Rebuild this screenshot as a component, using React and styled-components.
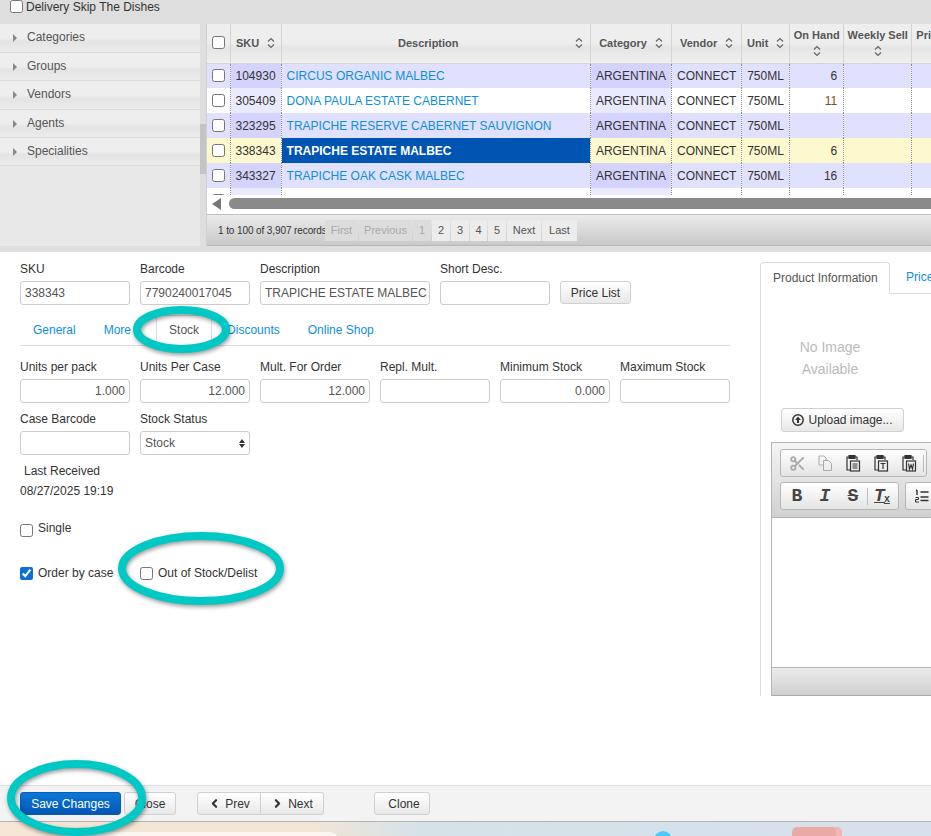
import styled, { createGlobalStyle } from 'styled-components';
import { Scissors, ChevronLeft, ChevronRight } from 'lucide-react';

const GlobalStyle = createGlobalStyle`
    html, body {
        margin: 0;
        padding: 0;
        background: #fff;
    }
    body {
        font-family: "Liberation Sans", Arial, sans-serif;
        font-size: 12px;
        color: #333;
    }
`;

const Page = styled.div`
    position: relative;
    width: 931px;
    height: 836px;
    overflow: hidden;
    display: flex;
    flex-direction: column;
`;

/* top band */
const TopBand = styled.div`
    height: 24px;
    background: #dedede;
    display: flex;
    align-items: flex-start;
    padding-left: 10px;
`;

const Check = styled.input.attrs({ type: 'checkbox' })`
    width: 13px;
    height: 13px;
    margin: 0;
    flex: none;
    accent-color: #0b6fd6;
`;

const TopLabel = styled.label`
    display: flex;
    align-items: center;
    gap: 3px;
    height: 13px;
    color: #333;
`;

const ListArea = styled.div`
    height: 228px;
    background: #dedede;
    display: flex;
    align-items: flex-start;
`;

const Sidebar = styled.div`
    width: 200px;
    height: 222px;
    background: #e8e8e8;
    flex: none;
`;

const SideItem = styled.div`
    height: ${(p) => p.$h}px;
    display: flex;
    align-items: center;
    padding: 0 0 2px 13px;
    gap: 10px;
    color: #555;
    border-bottom: 1px solid #dcdcdc;
    background: linear-gradient(#eeeeee 0, #eeeeee 50%, #e4e4e4 62%, #ececec 100%);
    box-sizing: border-box;
`;

const Arrow = styled.span`
    width: 0;
    height: 0;
    margin-top: 2px;
    border-left: 4px solid #888;
    border-top: 4px solid transparent;
    border-bottom: 4px solid transparent;
`;

const Splitter = styled.div`
    width: 6px;
    height: 222px;
    flex: none;
    background: #dedede;
    display: flex;
    flex-direction: column;
    padding-top: 100px;
    box-sizing: border-box;
`;

const SplitThumb = styled.div`
    height: 50px;
    background: #c4c4c4;
`;

const GridPanel = styled.div`
    flex: 1;
    min-width: 0;
    height: 222px;
    overflow: hidden;
    background: #fff;
    border-left: 1px solid #d0d0d0;
    display: flex;
    flex-direction: column;
`;

const TableClip = styled.div`
    height: 171px;
    overflow: hidden;
    flex: none;
`;

const Table = styled.table`
    border-collapse: collapse;
    table-layout: fixed;
    width: 800px;
`;

const Th = styled.th`
    width: ${(p) => p.$w}px;
    height: 39px;
    padding: 0 2px;
    box-sizing: border-box;
    font-size: 11px;
    font-weight: bold;
    color: #555;
    text-align: center;
    vertical-align: middle;
    white-space: nowrap;
    overflow: hidden;
    background: linear-gradient(#eeeeee 0, #eeeeee 48%, #e5e5e5 62%, #f0f0f0 100%);
    border-left: 1px solid #d4d4d4;
    border-bottom: 1px solid #d4d4d4;
    &:first-child {
        border-left: 0;
    }
`;

const ThInner = styled.div`
    display: flex;
    flex-direction: ${(p) => (p.$stack ? 'column' : 'row')};
    align-items: center;
    justify-content: ${(p) => (p.$start ? 'flex-start' : 'center')};
    gap: ${(p) => (p.$stack ? 4 : 8)}px;
    padding-left: ${(p) => (p.$start ? 2 : 0)}px;
    padding-right: ${(p) => p.$pr || 0}px;
    padding-bottom: ${(p) => (p.$start ? 16 : 0)}px;
`;

const DescTitle = styled.span`
    flex: 1;
    padding-left: 6px;
    text-align: center;
`;

const Td = styled.td`
    height: 25px;
    padding: 0 ${(p) => (p.$right ? 6 : 5)}px;
    box-sizing: border-box;
    white-space: nowrap;
    overflow: hidden;
    font-size: 12px;
    text-align: ${(p) => (p.$right ? 'right' : 'left')};
    color: ${(p) => p.$color || '#333'};
    background: ${(p) => p.$bg};
    border-left: 1px dotted #8d8d8d;
    &:first-child {
        border-left: 0;
        text-align: center;
        padding: 0;
    }
    input {
        display: block;
        margin: 0 auto;
    }
`;

const Link = styled.span`
    color: #0d8fdb;
`;

const Selected = styled.span`
    color: #fff;
    font-weight: bold;
`;

const HScroll = styled.div`
    height: 17px;
    flex: none;
    display: flex;
    align-items: center;
    padding-left: 5px;
    gap: 8px;
`;

const ScrollLeft = styled.span`
    width: 0;
    height: 0;
    border-right: 9px solid #777;
    border-top: 6px solid transparent;
    border-bottom: 6px solid transparent;
`;

const ScrollThumb = styled.div`
    flex: 1;
    height: 11px;
    background: #8a8a8a;
    border-radius: 6px 0 0 6px;
`;

const Pager = styled.div`
    height: 32px;
    margin-top: 2px;
    flex: none;
    box-sizing: border-box;
    border-top: 1px solid #c0c0c0;
    border-bottom: 1px solid #b8b8b8;
    background: linear-gradient(#ebebeb, #c9c9c9);
    display: flex;
    align-items: center;
    padding-left: 11px;
`;

const PagerInfo = styled.span`
    font-size: 10px;
    letter-spacing: -0.1px;
    color: #333;
    width: 107px;
    flex: none;
    white-space: nowrap;
`;

const PageButton = styled.span`
    height: 21px;
    width: ${(p) => p.$w}px;
    margin-right: 1px;
    display: flex;
    align-items: center;
    justify-content: center;
    font-size: 11px;
    color: ${(p) => (p.$off ? '#aaa' : '#555')};
    background: ${(p) => (p.$off ? '#dcdcdc' : '#ececec')};
`;

/* product form */
const Editor = styled.div`
    flex: 1;
    display: flex;
    background: #fff;
    min-height: 0;
`;

const FormColumn = styled.div`
    width: 730px;
    flex: none;
    padding: 10px 0 0 20px;
    box-sizing: border-box;
`;

const FieldRow = styled.div`
    display: flex;
    align-items: flex-end;
    gap: 10px;
    margin-bottom: ${(p) => p.$mb || 0}px;
`;

const Field = styled.div`
    width: ${(p) => (p.$wide ? 170 : 110)}px;
    flex: none;
`;

const FieldLabel = styled.div`
    height: 19px;
    line-height: 15px;
    white-space: nowrap;
`;

const TextBox = styled.div`
    height: 24px;
    box-sizing: border-box;
    border: 1px solid #ccc;
    border-radius: 3px;
    padding: 0 4px;
    display: flex;
    align-items: center;
    justify-content: ${(p) => (p.$right ? 'flex-end' : 'space-between')};
    white-space: nowrap;
    overflow: hidden;
    color: #555;
    background: #fff;
`;

const Carets = styled.span`
    display: flex;
    flex-direction: column;
    gap: 1px;
    &::before, &::after {
        content: '';
        width: 0;
        height: 0;
        border-left: 3px solid transparent;
        border-right: 3px solid transparent;
    }
    &::before {
        border-bottom: 4px solid #333;
    }
    &::after {
        border-top: 4px solid #333;
    }
`;

const Button = styled.button`
    height: ${(p) => p.$h || 24}px;
    width: ${(p) => p.$w}px;
    padding: 0 0 0 ${(p) => p.$pl || 0}px;
    margin-left: ${(p) => p.$ml || 0}px;
    margin-bottom: ${(p) => p.$mb || 0}px;
    flex: none;
    border: 1px solid #d0d0d0;
    border-radius: 3px;
    font: 12px "Liberation Sans", Arial, sans-serif;
    color: #333;
    background: linear-gradient(#fff, #e8e8e8);
    display: inline-flex;
    align-items: center;
    justify-content: center;
    gap: 4px;
`;

const TabBar = styled.div`
    height: 30px;
    margin: 10px 0 14px;
    width: 710px;
    display: flex;
    align-items: stretch;
    border-bottom: 1px solid #ddd;
`;

const Tab = styled.div`
    padding: 0 13px;
    margin-right: ${(p) => p.$mr ?? 2}px;
    display: flex;
    align-items: center;
    color: ${(p) => (p.$active ? '#555' : '#0d8fdb')};
    ${(p) => p.$active && `
        border: 1px solid #ddd;
        border-bottom: 0;
        padding: 0 12px 1px;
        background: #fff;
    `}
`;

const InfoLine = styled.div`
    padding-left: ${(p) => p.$pl || 0}px;
    margin-top: ${(p) => p.$mt || 0}px;
    line-height: 15px;
`;

const CheckRow = styled.div`
    display: flex;
    align-items: center;
    margin-top: ${(p) => p.$mt}px;
`;

const CheckItem = styled.label`
    display: flex;
    align-items: ${(p) => (p.$raised ? 'flex-start' : 'center')};
    gap: 5px;
    width: ${(p) => p.$w || 'auto'};
    span {
        margin-top: ${(p) => (p.$raised ? -3 : 0)}px;
    }
`;

/* right column */
const SidePane = styled.div`
    flex: 1;
    min-width: 0;
    padding: 10px 0 0 30px;
    overflow: hidden;
`;

const SideTabs = styled.div`
    height: 31px;
    display: flex;
    width: 300px;
    border-bottom: 1px solid #ddd;
`;

const SideTab = styled.div`
    display: flex;
    align-items: center;
    box-sizing: border-box;
    height: 32px;
    padding: 0 0 2px 16px;
    flex: none;
    white-space: nowrap;
    color: ${(p) => (p.$active ? '#555' : '#0d8fdb')};
    ${(p) => p.$active && `
        width: 130px;
        padding-left: 12px;
        border: 1px solid #ddd;
        border-bottom: 0;
        border-radius: 4px 4px 0 0;
        background: #fff;
    `}
`;

const SideBody = styled.div`
    height: 402px;
    width: 300px;
    border-left: 1px solid #ddd;
    padding: 0 0 0 10px;
    box-sizing: border-box;
`;

const NoImage = styled.div`
    width: 118px;
    height: 114px;
    display: flex;
    flex-direction: column;
    justify-content: flex-end;
    align-items: center;
    padding-bottom: 28px;
    box-sizing: border-box;
    font-size: 14px;
    line-height: 22px;
    text-align: center;
    color: #bbb;
`;

const UploadRow = styled.div`
    padding-left: 10px;
`;

const Wysiwyg = styled.div`
    margin-top: 10px;
    height: 254px;
    border: 1px solid #b6b6b6;
    border-bottom-color: #aaa;
    box-sizing: border-box;
    display: flex;
    flex-direction: column;
`;

const WysiwygTools = styled.div`
    height: 75px;
    box-sizing: border-box;
    flex: none;
    padding: 6px 0 0 8px;
    background: linear-gradient(#f4f4f4, #cfd1cf);
    border-bottom: 1px solid #b6b6b6;
    display: flex;
    flex-direction: column;
    gap: 5px;
`;

const ToolRow = styled.div`
    display: flex;
    gap: 6px;
`;

const ToolGroup = styled.div`
    height: 28px;
    box-sizing: border-box;
    flex: none;
    border: 1px solid #b6b6b6;
    border-radius: 3px;
    background: linear-gradient(#fff, #e4e4e4);
    display: flex;
    align-items: center;
    padding: 0 2px;
`;

const ToolIcon = styled.span`
    width: 28px;
    height: 26px;
    display: flex;
    align-items: center;
    justify-content: center;
    font-family: "Liberation Mono", monospace;
    font-weight: bold;
    font-style: ${(p) => (p.$italic ? 'italic' : 'normal')};
    font-size: 18px;
    color: ${(p) => (p.$off ? '#aaa' : '#444')};
    text-decoration: ${(p) => (p.$strike ? 'line-through' : p.$under ? 'underline' : 'none')};
`;

const ClearMark = styled.span`
    font-size: 10px;
    font-style: normal;
    align-self: flex-end;
    margin: 0 0 4px -1px;
`;

const ToolSep = styled.span`
    width: 1px;
    height: 17px;
    background: #bbb;
`;

const WysiwygBody = styled.div`
    flex: 1;
    background: #fff;
`;

const WysiwygFoot = styled.div`
    height: 27px;
    flex: none;
    border-top: 1px solid #b6b6b6;
    background: linear-gradient(#ebebeb, #cfd1cf);
`;

/* footer */
const Footer = styled.div`
    height: 37px;
    flex: none;
    box-sizing: border-box;
    background: #f3f3f3;
    border-top: 1px solid #ddd;
    border-bottom: 1px solid #b4b4b4;
    display: flex;
    align-items: center;
    padding-left: 20px;
`;

const SaveButton = styled(Button)`
    color: #fff;
    border-color: #0b5bb5;
    background: linear-gradient(#0a78d8, #0556b4);
`;

const Pair = styled.div`
    display: flex;
    margin-left: ${(p) => p.$ml}px;
    ${Button}:first-child {
        border-radius: 3px 0 0 3px;
    }
    ${Button}:last-child {
        border-radius: 0 3px 3px 0;
        border-left: 0;
    }
`;

const Desktop = styled.svg`
    display: block;
    width: 931px;
    height: 14px;
    flex: none;
`;

/* teal marker rings drawn on top of the screenshot */
const Ring = styled.svg`
    position: absolute;
    left: ${(p) => p.$x}px;
    top: ${(p) => p.$y}px;
    overflow: visible;
    pointer-events: none;
    filter: drop-shadow(1px 2px 2px rgba(0, 0, 0, 0.4));
`;

const Marker = ({ x, y, w, h }) => (
    <Ring $x={x} $y={y} width={w} height={h}>
        <ellipse cx={w / 2} cy={h / 2} rx={w / 2 - 4} ry={h / 2 - 4} fill="none" stroke="#00c9c5" strokeWidth="8" />
    </Ring>
);

const SortIcon = () => (
    <svg width="8" height="12" viewBox="0 0 8 12" fill="none" stroke="#666" strokeWidth="1.2">
        <path d="M1 4.5 4 1.5 7 4.5M1 7.5 4 10.5 7 7.5" />
    </svg>
);

const PasteIcon = ({ letter }) => (
    <svg width="16" height="18" viewBox="0 0 16 18" fill="none" stroke="#333" strokeWidth="1.2">
        <path d="M4 3H2v13h3" />
        <path d="M4 1.5h6v3H4z" fill="#333" />
        <path d="M10 3h2v3" />
        <rect x="5.5" y="7" width="9" height="10" />
        {letter === 'lines' && <path d="M7.5 10h5M7.5 12h5M7.5 14h5" />}
        {letter === 'T' && <path d="M7.5 9.5h5M10 9.5V15" />}
        {letter === 'W' && <path d="M7.5 9.5l1 5.5 1.5-4 1.5 4 1-5.5" />}
    </svg>
);

const CopyIcon = () => (
    <svg width="15" height="16" viewBox="0 0 15 16" fill="none" stroke="#aaa">
        <path d="M1 1h5l2 2v2M1 1v9h4" />
        <path d="M5.5 5.5h5l3 3v7h-8z" />
    </svg>
);

const ListIcon = () => (
    <svg width="14" height="14" viewBox="0 0 14 14" fill="none" stroke="#333" strokeWidth="1.4">
        <path d="M5.5 3h8M5.5 8h8M5.5 11.5h8M2 1v5M1 1.5 2 1" />
        <path d="M.5 8.5h3v2h-3v2.5h3.5" strokeWidth="1" />
    </svg>
);

const UploadIcon = () => (
    <svg width="12" height="12" viewBox="0 0 12 12">
        <circle cx="6" cy="6" r="5.2" fill="none" stroke="#333" strokeWidth="1.5" />
        <path d="M6 2.5 9 6H7v3H5V6H3z" fill="#333" />
    </svg>
);

const columns = [
    { w: 23 }, { w: 51, title: 'SKU' }, { w: 309, title: 'Description' }, { w: 81, title: 'Category' },
    { w: 70, title: 'Vendor' }, { w: 48, title: 'Unit' }, { w: 54, title: 'On Hand', stack: true },
    { w: 68, title: 'Weekly Sell', stack: true }, { w: 95, title: 'Pri', start: true },
];

const rows = [
    { sku: '104930', name: 'CIRCUS ORGANIC MALBEC', hand: '6' },
    { sku: '305409', name: 'DONA PAULA ESTATE CABERNET', hand: '11', handColor: '#7a5020' },
    { sku: '323295', name: 'TRAPICHE RESERVE CABERNET SAUVIGNON', hand: '' },
    { sku: '338343', name: 'TRAPICHE ESTATE MALBEC', hand: '6', selected: true },
    { sku: '343327', name: 'TRAPICHE OAK CASK MALBEC', hand: '16' },
    { sku: '', name: '', hand: '' },
];

const pages = [
    { label: 'First', w: 33, off: true }, { label: 'Previous', w: 53, off: true }, { label: '1', w: 18, off: true },
    { label: '2', w: 18 }, { label: '3', w: 18 }, { label: '4', w: 17 }, { label: '5', w: 18 },
    { label: 'Next', w: 34 }, { label: 'Last', w: 35 },
];

const rowColors = (row, index) => {
    if (row.selected) return { base: '#fdf8cd', sorted: '#fdf8cd' };
    return index % 2 === 0 ? { base: '#e0e0ff', sorted: '#d3d3fd' } : { base: '#fff', sorted: '#eaeaff' };
};

const App = () => (
    <Page>
        <GlobalStyle />
        <TopBand>
            <TopLabel>
                <Check readOnly />
                Delivery Skip The Dishes
            </TopLabel>
        </TopBand>
        <ListArea>
            <Sidebar>
                <SideItem $h={29}><Arrow />Categories</SideItem>
                <SideItem $h={28}><Arrow />Groups</SideItem>
                <SideItem $h={29}><Arrow />Vendors</SideItem>
                <SideItem $h={28}><Arrow />Agents</SideItem>
                <SideItem $h={28}><Arrow />Specialities</SideItem>
            </Sidebar>
            <Splitter><SplitThumb /></Splitter>
            <GridPanel>
                <TableClip>
                    <Table>
                        <thead>
                            <tr>
                                {columns.map((col, i) => (
                                    <Th key={i} $w={col.w}>
                                        {i === 0 ? <Check readOnly /> : (
                                            <ThInner $stack={col.stack} $start={col.start} $pr={i === 2 ? 5 : 0}>
                                                {i === 2 ? <DescTitle>{col.title}</DescTitle> : <span>{col.title}</span>}
                                                {!col.start && <SortIcon />}
                                            </ThInner>
                                        )}
                                    </Th>
                                ))}
                            </tr>
                        </thead>
                        <tbody>
                            {rows.map((row, i) => {
                                const { base, sorted } = rowColors(row, i);
                                return (
                                    <tr key={i}>
                                        <Td $bg={base}><Check readOnly /></Td>
                                        <Td $bg={sorted}>{row.sku}</Td>
                                        <Td $bg={row.selected ? '#0055b3' : base}>
                                            {row.selected ? <Selected>{row.name}</Selected> : <Link>{row.name}</Link>}
                                        </Td>
                                        <Td $bg={sorted}>{row.sku && 'ARGENTINA'}</Td>
                                        <Td $bg={base}>{row.sku && 'CONNECT'}</Td>
                                        <Td $bg={base}>{row.sku && '750ML'}</Td>
                                        <Td $bg={base} $right $color={row.handColor}>{row.hand}</Td>
                                        <Td $bg={base} />
                                        <Td $bg={base} />
                                    </tr>
                                );
                            })}
                        </tbody>
                    </Table>
                </TableClip>
                <HScroll><ScrollLeft /><ScrollThumb /></HScroll>
                <Pager>
                    <PagerInfo>1 to 100 of 3,907 records</PagerInfo>
                    {pages.map((p) => (
                        <PageButton key={p.label} $w={p.w} $off={p.off}>{p.label}</PageButton>
                    ))}
                </Pager>
            </GridPanel>
        </ListArea>
        <Editor>
            <FormColumn>
                <FieldRow>
                    <Field><FieldLabel>SKU</FieldLabel><TextBox>338343</TextBox></Field>
                    <Field><FieldLabel>Barcode</FieldLabel><TextBox>7790240017045</TextBox></Field>
                    <Field $wide><FieldLabel>Description</FieldLabel><TextBox>TRAPICHE ESTATE MALBEC</TextBox></Field>
                    <Field><FieldLabel>Short Desc.</FieldLabel><TextBox /></Field>
                    <Button $w={71} $h={23} $mb={1}>Price List</Button>
                </FieldRow>
                <TabBar>
                    <Tab>General</Tab>
                    <Tab $mr={12}>More</Tab>
                    <Tab $active>Stock</Tab>
                    <Tab>Discounts</Tab>
                    <Tab>Online Shop</Tab>
                </TabBar>
                <FieldRow $mb={9}>
                    <Field><FieldLabel>Units per pack</FieldLabel><TextBox $right>1.000</TextBox></Field>
                    <Field><FieldLabel>Units Per Case</FieldLabel><TextBox $right>12.000</TextBox></Field>
                    <Field><FieldLabel>Mult. For Order</FieldLabel><TextBox $right>12.000</TextBox></Field>
                    <Field><FieldLabel>Repl. Mult.</FieldLabel><TextBox $right /></Field>
                    <Field><FieldLabel>Minimum Stock</FieldLabel><TextBox $right>0.000</TextBox></Field>
                    <Field><FieldLabel>Maximum Stock</FieldLabel><TextBox $right /></Field>
                </FieldRow>
                <FieldRow>
                    <Field><FieldLabel>Case Barcode</FieldLabel><TextBox /></Field>
                    <Field><FieldLabel>Stock Status</FieldLabel><TextBox>Stock<Carets /></TextBox></Field>
                </FieldRow>
                <InfoLine $pl={4} $mt={9}>Last Received</InfoLine>
                <InfoLine $mt={5}>08/27/2025 19:19</InfoLine>
                <CheckRow $mt={25}>
                    <CheckItem $raised><Check readOnly /><span>Single</span></CheckItem>
                </CheckRow>
                <CheckRow $mt={29}>
                    <CheckItem $w="120px"><Check defaultChecked />Order by case</CheckItem>
                    <CheckItem><Check readOnly />Out of Stock/Delist</CheckItem>
                </CheckRow>
            </FormColumn>
            <SidePane>
                <SideTabs>
                    <SideTab $active>Product Information</SideTab>
                    <SideTab>Price</SideTab>
                </SideTabs>
                <SideBody>
                    <NoImage>No Image<br />Available</NoImage>
                    <UploadRow><Button $w={123} $h={24}><UploadIcon />Upload image...</Button></UploadRow>
                    <Wysiwyg>
                        <WysiwygTools>
                            <ToolRow>
                                <ToolGroup>
                                    <ToolIcon $off><Scissors size={17} strokeWidth={2.6} /></ToolIcon>
                                    <ToolIcon $off><CopyIcon /></ToolIcon>
                                    <ToolIcon><PasteIcon letter="lines" /></ToolIcon>
                                    <ToolIcon><PasteIcon letter="T" /></ToolIcon>
                                    <ToolIcon><PasteIcon letter="W" /></ToolIcon>
                                    <ToolSep />
                                </ToolGroup>
                            </ToolRow>
                            <ToolRow>
                                <ToolGroup>
                                    <ToolIcon>B</ToolIcon>
                                    <ToolIcon $italic>I</ToolIcon>
                                    <ToolIcon $strike>S</ToolIcon>
                                    <ToolSep />
                                    <ToolIcon $italic $under>T<ClearMark>x</ClearMark></ToolIcon>
                                </ToolGroup>
                                <ToolGroup><ToolIcon><ListIcon /></ToolIcon><ToolIcon /></ToolGroup>
                            </ToolRow>
                        </WysiwygTools>
                        <WysiwygBody />
                        <WysiwygFoot />
                    </Wysiwyg>
                </SideBody>
            </SidePane>
        </Editor>
        <Footer>
            <SaveButton $w={101} $h={23}>Save Changes</SaveButton>
            <Button $w={52} $h={23} $ml={3}>Close</Button>
            <Pair $ml={21}>
                <Button $w={64} $h={23}><ChevronLeft size={13} strokeWidth={4} />Prev</Button>
                <Button $w={63} $h={23}><ChevronRight size={13} strokeWidth={4} />Next</Button>
            </Pair>
            <Button $w={56} $h={23} $ml={50} $pl={4}>Clone</Button>
        </Footer>
        <Desktop viewBox="0 0 931 14">
            <defs>
                <linearGradient id="wall" x1="0" x2="1" y1="0" y2="0">
                    <stop offset="0" stopColor="#f5e6d6" />
                    <stop offset="0.33" stopColor="#f2e5d5" />
                    <stop offset="0.45" stopColor="#d5e3e9" />
                    <stop offset="1" stopColor="#d6e0ec" />
                </linearGradient>
            </defs>
            <rect width="931" height="14" fill="url(#wall)" />
            <rect x="60" y="10" width="278" height="20" rx="8" fill="#fbf6ef" />
            <circle cx="663" cy="18" r="9" fill="#4ec8fb" />
            <rect x="798" y="5" width="44" height="20" rx="5" fill="#f0b6b2" />
            <rect x="792" y="5" width="44" height="20" rx="5" fill="#e9aaa6" />
        </Desktop>
        <Marker x={133} y={306} w={97} h={47} />
        <Marker x={118} y={532} w={166} h={73} />
        <Marker x={7} y={760} w={139} h={76} />
    </Page>
);

export default App;
